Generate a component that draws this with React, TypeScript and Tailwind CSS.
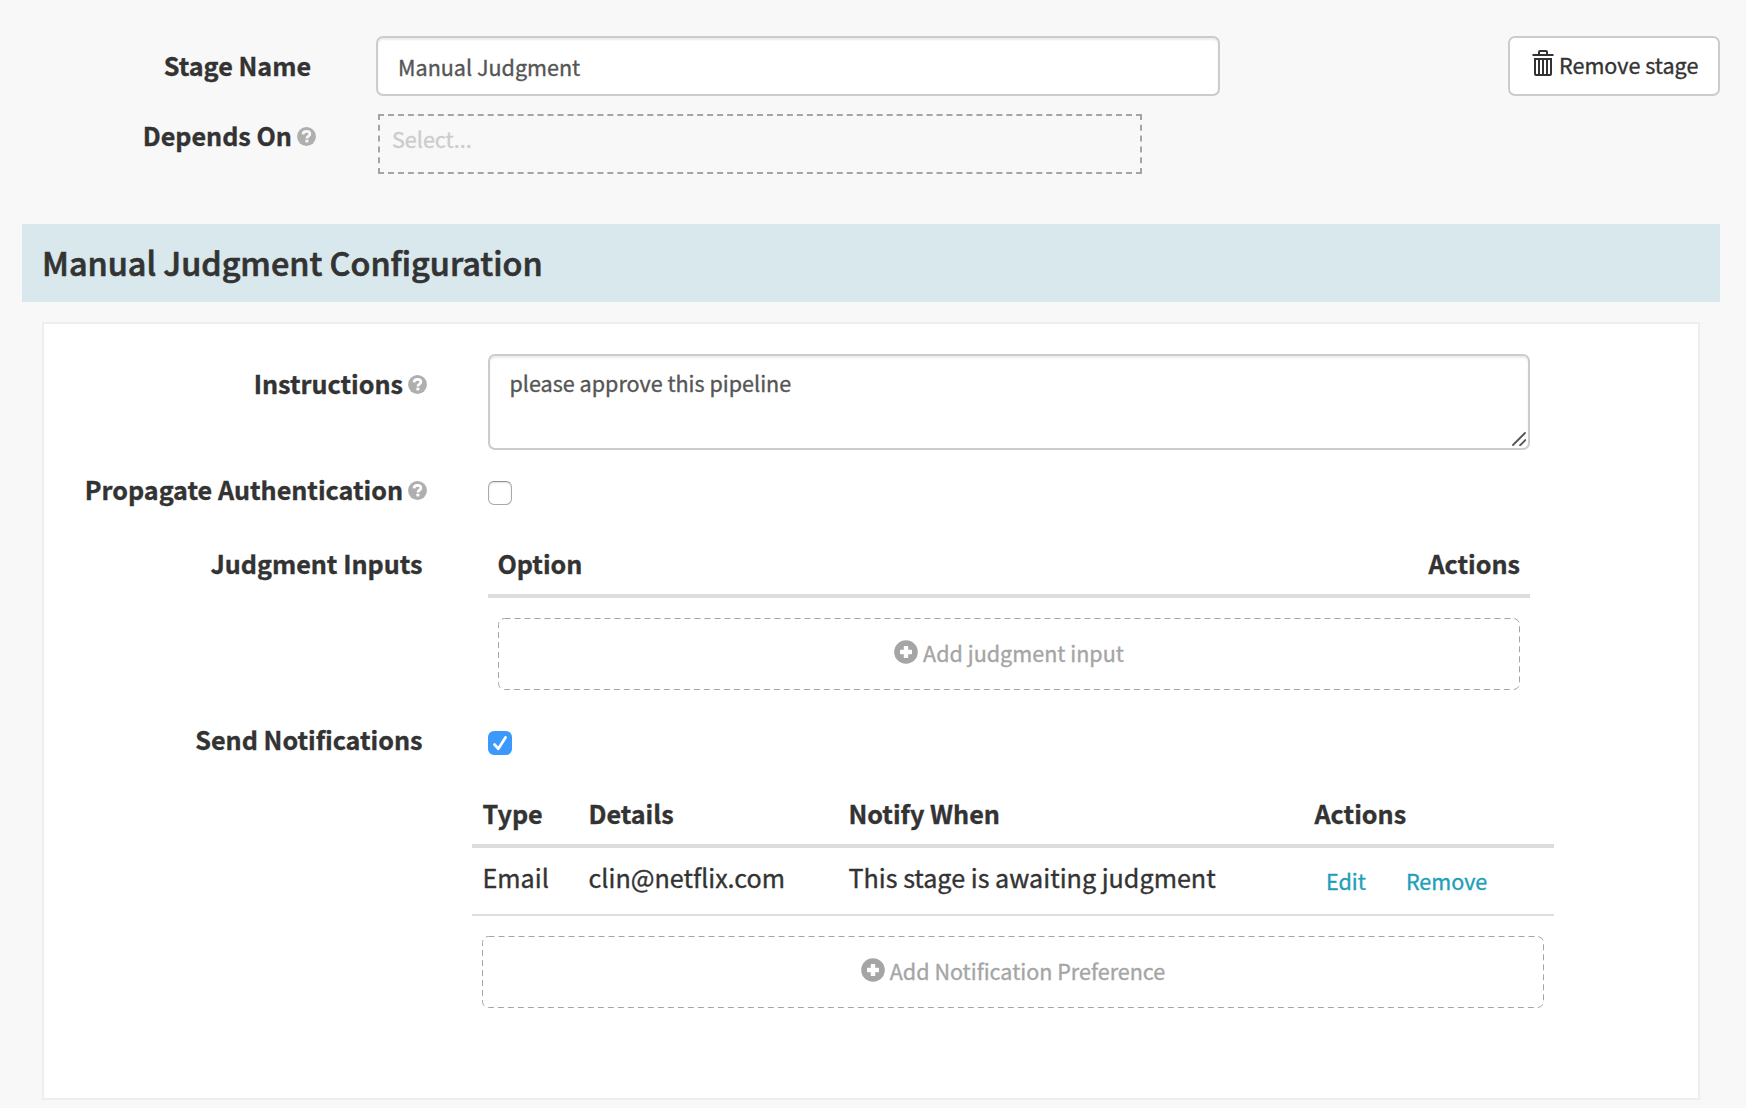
import type { ReactNode } from "react";

function TrashIcon() {
  return (
    <svg viewBox="0 0 22 26" className="block h-[26px] w-[22px]" fill="#333333">
      <path
        fillRule="evenodd"
        d="M6 4V2Q6 0 8 0h6q2 0 2 2v2h5.5v2H.5V4zM8 4h6V2H8z"
      />
      <path
        fillRule="evenodd"
        d="M2 8h18v16q0 2-2 2H4q-2 0-2-2zM4 10v14h2V10zm4 0v14h2V10zm4 0v14h2V10zm4 0v14h2V10z"
      />
    </svg>
  );
}

function PlusCircle() {
  return (
    <svg viewBox="0 0 24 24" className="block h-6 w-6 shrink-0">
      <circle cx="12" cy="12" r="11.8" fill="#a5a5a5" />
      <path d="M10.4 6h3.2q.6 0 .6.6v3.2h3.2q.6 0 .6.6v3.2q0 .6-.6.6h-3.2v3.2q0 .6-.6.6h-3.2q-.6 0-.6-.6v-3.2H6.600q-.6 0-.6-.6v-3.200q0-.6.6-.6h3.200V6.600q0-.6.6-.6z" fill="#fff" />
    </svg>
  );
}

function HelpIcon({ hole }: { hole: string }) {
  return (
    <svg viewBox="0 0 19 19" className="ml-1 block h-[19px] w-[19px] shrink-0">
      <circle cx="9.500" cy="9.500" r="9.400" fill="#afafaf" />
      <path d="M6 7.400C6.100 5.100 7.500 4.300 9.500 4.300c2.100 0 3.400 1 3.400 2.700 0 2.200-3 2.100-3 4.400" fill="none" stroke={hole} strokeWidth="2.700" />
      <rect x="8.400" y="12.700" width="3" height="2.700" fill={hole} />
    </svg>
  );
}

function AddButton({ children }: { children: ReactNode }) {
  return (
    <button className="relative mx-[10px] mt-5 flex h-[72px] items-start justify-center pt-[22px] text-[21.55px] leading-[26px] text-[#a5a5a5]">
      <svg className="absolute inset-0 h-full w-full overflow-visible" fill="none" stroke="#a5a5a5" strokeDasharray="6 4">
        <rect x="0.5" y="0.5" width="100%" height="100%" rx="6" className="h-[71px] w-[calc(100%-1px)]" />
      </svg>
      <PlusCircle />
      <span className="ml-[5px]">{children}</span>
    </button>
  );
}

export default function App() {
  return (
    <div className="flex h-[1108px] w-full flex-col overflow-hidden bg-[#f8f8f8] pl-[22px] pr-[26px] pt-9 font-['Noto_Sans_CJK_SC',sans-serif] text-[25.15px] text-[#333333] [-webkit-text-stroke-width:0.35px]">
      <div className="flex h-[60px]">
        <label className="w-[294px] pr-[5px] text-right font-bold leading-[58px]">Stage Name</label>
        <div className="ml-[60px] w-[844px] rounded-[7px] border-2 border-[#cccccc] bg-white px-5 text-[21.55px] leading-[57px] text-[#555555] shadow-[inset_0_2px_2px_rgba(0,0,0,0.075)]">
          Manual Judgment
        </div>
        <button className="ml-auto flex w-[212px] rounded-[7px] border-2 border-[#cccccc] bg-white pl-[22px] text-[21.55px]">
          <span className="mt-3"><TrashIcon /></span>
          <span className="ml-[5px] leading-[53px]">Remove stage</span>
        </button>
      </div>

      <div className="mt-[18px] flex h-[60px]">
        <label className="flex w-[294px] justify-end font-bold leading-[42px]">
          Depends On
          <span className="ml-px pt-[13px]"><HelpIcon hole="#f8f8f8" /></span>
        </label>
        <div className="ml-[62px] w-[764px] border-2 border-dashed border-[#a5a5a5] px-3 text-[21.55px] leading-[45px] text-[#cccccc]">
          Select...
        </div>
      </div>

      <h2 className="mt-[50px] h-[78px] shrink-0 bg-[#d9e8ed] pl-5 text-[32.4px] font-medium leading-[76px] [-webkit-text-stroke-width:0.7px]">
        Manual Judgment Configuration
      </h2>

      <section className="ml-5 mr-5 mt-5 h-[778px] shrink-0 border-2 border-[#eeeeee] bg-white pt-[30px]">
        <div className="flex h-[96px]">
          <label className="flex w-[383px] justify-end font-bold leading-[58px]">
            Instructions
            <span className="ml-px pt-[21px]"><HelpIcon hole="#ffffff" /></span>
          </label>
          <div className="ml-[61px] flex w-[1042px] justify-between rounded-[7px] border-2 border-[#cccccc] pl-[19.5px] pt-3 text-[21.55px] leading-[30px] text-[#555555] shadow-[inset_0_2px_2px_rgba(0,0,0,0.075)]">
            please approve this pipeline
            <svg viewBox="0 0 14 14" className="mb-[2px] mr-[2px] h-[14px] w-[14px] self-end" stroke="#555555" strokeWidth="1.800" strokeLinecap="round">
              <path d="M1 13 13 1M8 13.500l5.500-5.500" />
            </svg>
          </div>
        </div>

        <div className="mt-[22px] flex h-[34px]">
          <label className="flex w-[383px] justify-end font-bold leading-[34px]">
            Propagate Authentication
            <span className="ml-px pt-[9px]"><HelpIcon hole="#ffffff" /></span>
          </label>
          <span className="ml-[61px] mt-[9px] h-6 w-6 rounded-[6px] border border-[#aaaaaa] border-t-[#8e8e8e] bg-white shadow-[inset_0_1px_2px_rgba(0,0,0,0.12)]" />
        </div>

        <div className="mt-[34px] flex">
          <label className="w-[383px] pr-[4.500px] text-right font-bold leading-[46px]">Judgment Inputs</label>
          <div className="ml-[61px] flex w-[1042px] flex-col">
            <div className="flex h-[58px] justify-between border-b-4 border-[#dddddd] pl-[9.500px] pr-[10px] font-bold leading-[46px]">
              <span>Option</span>
              <span>Actions</span>
            </div>
            <AddButton>Add judgment input</AddButton>
          </div>
        </div>

        <div className="mt-8 flex h-[34px]">
          <label className="w-[383px] pr-[4.500px] text-right font-bold leading-[34px]">Send Notifications</label>
          <span className="ml-[61px] mt-[9px] h-6 w-6 rounded-[6px] bg-[#3b99fc]">
            <svg viewBox="0 0 24 24" className="h-6 w-6" fill="none" stroke="#fff" strokeWidth="2.700" strokeLinecap="round" strokeLinejoin="round">
              <path d="M6.500 13.500 10.300 17.800 17.500 6.500" />
            </svg>
          </span>
        </div>

        <div className="ml-[428px] mt-[34px] flex w-[1082px] flex-col">
          <div className="grid h-[58px] grid-cols-[106px_260px_466px_1fr] border-b-4 border-[#dddddd] pl-[10.500px] font-bold leading-[46px]">
            <span>Type</span>
            <span>Details</span>
            <span>Notify When</span>
            <span>Actions</span>
          </div>
          <div className="grid h-[68px] grid-cols-[106px_260px_466px_1fr] border-b-2 border-[#dddddd] pl-[10.500px] leading-[58px]">
            <span>Email</span>
            <span>clin@netflix.com</span>
            <span>This stage is awaiting judgment</span>
            <span className="flex gap-[40px] pl-[11.500px] text-[21.55px] leading-[65px] text-[#229fb8]">
              <a>Edit</a>
              <a>Remove</a>
            </span>
          </div>
          <AddButton>Add Notification Preference</AddButton>
        </div>
      </section>
    </div>
  );
}
